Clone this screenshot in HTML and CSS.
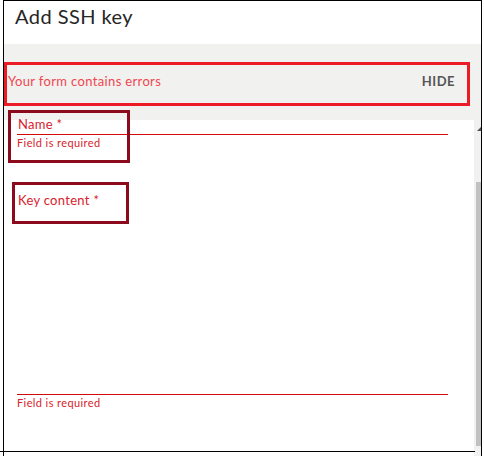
FILE: index.html
```html
<!DOCTYPE html>
<html>
<head>
<meta charset="utf-8">
<link rel="stylesheet" href="styles.css">
</head>
<body>
<div class="frame">
  <div class="header"><h1 class="title">Add SSH key</h1></div>
  <div class="body">
    <div class="banner">
      <span class="banner-text">Your form contains errors</span>
      <span class="banner-hide">HIDE</span>
    </div>
    <div class="main">
      <div class="content">
        <div class="fields">
          <div class="field">
            <div class="label">Name *</div>
            <div class="line"></div>
            <div class="error">Field is required</div>
          </div>
          <div class="field field-key">
            <div class="label">Key content *</div>
            <div class="area"></div>
            <div class="line"></div>
            <div class="error">Field is required</div>
          </div>
        </div>
      </div>
      <div class="scrollbar">
        <div class="arrow-up"></div>
        <div class="thumb"></div>
      </div>
    </div>
  </div>
  <div class="mark mark-name"></div>
  <div class="mark mark-key"></div>
</div>
<div class="bottom-line"></div>
</body>
</html>
```

FILE: styles.css
```css
html, body {
  margin: 0;
  padding: 0;
  background: #fff;
  height: 456px;
  overflow: hidden;
  font-family: Lato, "Open Sans", sans-serif;
}
.frame {
  position: relative;
  margin-left: 3px;
  width: 477px;
  height: 460px;
  border: 1px solid #000;
  border-bottom: none;
  display: flex;
  flex-direction: column;
}
.header {
  height: 40px;
  padding: 3px 0 0 11px;
  background: #fff;
}
.title {
  margin: 0;
  font-size: 20px;
  line-height: 24px;
  font-weight: 400;
  color: #262626;
  letter-spacing: 0.45px;
}
.body {
  flex: 1;
  background: #f1f1f0;
  display: flex;
  flex-direction: column;
  padding-top: 18px;
}
.banner {
  width: 466px;
  height: 44px;
  box-sizing: border-box;
  border: 3px solid #ec1c27;
  display: flex;
  justify-content: space-between;
  align-items: flex-start;
  padding: 8px 12px 0 1px;
  font-size: 13px;
  line-height: 16px;
}
.banner-text {
  color: #f0464f;
  letter-spacing: 0.35px;
}
.banner-hide {
  color: #555;
  font-weight: 700;
  letter-spacing: 0.5px;
}
.main {
  flex: 1;
  display: flex;
  margin-top: 14px;
}
.content {
  width: 470px;
  background: #fff;
}
.fields {
  margin-top: -4px;
  padding: 0 26px 0 13px;
}
.label {
  font-size: 13px;
  line-height: 16px;
  color: #d8222c;
  padding-left: 1px;
  letter-spacing: 0.3px;
}
.line {
  margin-top: 2px;
  border-bottom: 1px solid #d40a0a;
}
.error {
  font-size: 11px;
  line-height: 14px;
  color: #d8222c;
  padding-top: 1px;
  letter-spacing: 0.4px;
}
.field-key {
  margin-top: 42px;
}
.field-key .area {
  height: 186px;
}
.field-key .line {
  margin-top: 0;
}
.scrollbar {
  flex: 1;
  position: relative;
  background: #f1f1f1;
}
.arrow-up {
  position: absolute;
  right: 0;
  top: 7px;
  width: 0;
  height: 0;
  border-left: 4px solid transparent;
  border-bottom: 4px solid #505050;
}
.thumb {
  position: absolute;
  left: 2px;
  right: 0;
  top: 62px;
  height: 264px;
  background: #c1c1c1;
}
.mark {
  position: absolute;
  border: 3px solid #8b0a1c;
  box-sizing: border-box;
}
.mark-name {
  left: 4px;
  top: 109px;
  width: 122px;
  height: 53px;
}
.mark-key {
  left: 8px;
  top: 181px;
  width: 117px;
  height: 42px;
}
.bottom-line {
  position: absolute;
  left: 0;
  top: 451px;
  width: 475px;
  height: 1px;
  background: #000;
}
```
